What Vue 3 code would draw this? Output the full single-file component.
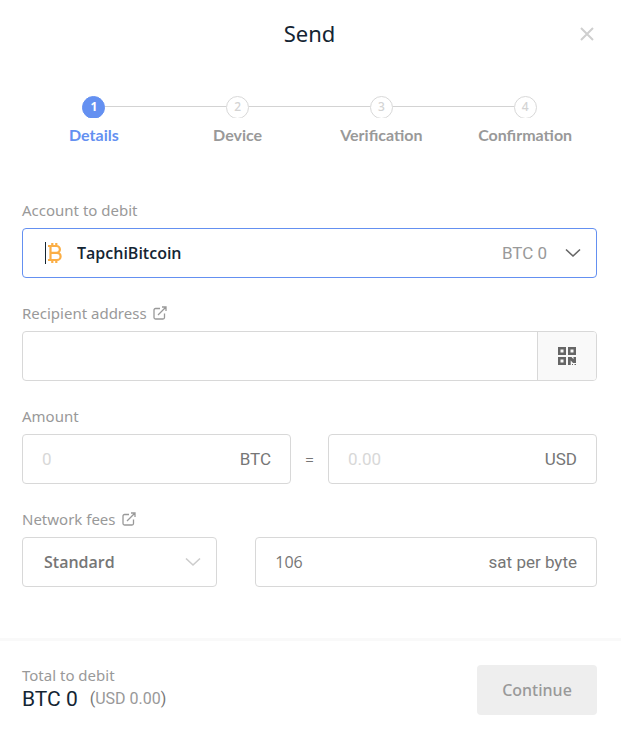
<script setup>
import { ref } from 'vue'

const steps = ['Details', 'Device', 'Verification', 'Confirmation']
const account = ref('TapchiBitcoin')
const recipient = ref('')
const amount = ref('')
const fiat = ref('')
const speed = ref('Standard')
const fee = ref('106')
</script>

<template>
  <main class="modal">
    <header class="head">
      <h1>Send</h1>
      <button class="close" type="button" aria-label="Close">
        <svg width="16" height="16" viewBox="0 0 16 16"><path d="M2 2l12 12M14 2L2 14" fill="none" stroke="#cfcfcf" stroke-width="2" /></svg>
      </button>
    </header>

    <ol class="steps">
      <li v-for="(name, i) in steps" :key="name" :class="{ active: i === 0 }">
        <div class="rail"><span class="dot">{{ i + 1 }}</span></div>
        <span class="name">{{ name }}</span>
      </li>
    </ol>

    <form class="form" @submit.prevent>
      <section>
        <label class="label" for="account">Account to debit</label>
        <div class="field account">
          <span class="caret"></span>
          <svg class="coin" width="16" height="22" viewBox="0 0 16 22">
            <path d="M1 4h8.500a3.300 3.300 0 0 1 0 6.800H3.500M3.500 10.800H10a3.600 3.600 0 0 1 0 7.200H1M3.500 4v14M5.300 1v3M9.300 1v3M5.300 18v3M9.300 18v3" fill="none" stroke="#fbae45" stroke-width="2.200" />
          </svg>
          <select id="account" v-model="account"><option>TapchiBitcoin</option></select>
          <span class="balance">BTC 0</span>
          <svg width="16" height="10" viewBox="0 0 16 10"><path d="M1 1.500l7 6.500 7-6.500" fill="none" stroke="#666" stroke-width="1.600" /></svg>
        </div>
      </section>

      <section>
        <label class="label" for="recipient">Recipient address
          <svg width="14" height="14" viewBox="0 0 14 14"><path d="M7 2.500H2.500a1.500 1.500 0 0 0-1.500 1.500v7.500A1.500 1.500 0 0 0 2.500 13H10a1.500 1.500 0 0 0 1.500-1.500V7.500M5 9l7.500-7.500M9 1h4v4" fill="none" stroke="#999" stroke-width="1.300" /></svg>
        </label>
        <div class="field recipient">
          <input id="recipient" v-model="recipient" type="text" />
          <button class="qr" type="button" aria-label="Scan QR code">
            <svg width="18" height="18" viewBox="0 0 18 18" fill="#666">
              <path fill-rule="evenodd" d="M0 0h8v8H0zM2.500 2.500v3h3v-3zM10 0h8v8h-8zM12.500 2.500v3h3v-3zM0 10h8v8H0zM2.500 12.500v3h3v-3z" />
              <path d="M10 10h3.500l2 2.300V10H18v6h-3l-2.300-2.500V18H10zM14 17h1v1h-1zM16.500 17h1.500v1h-1.500z" />
            </svg>
          </button>
        </div>
      </section>

      <section>
        <label class="label" for="amount">Amount</label>
        <div class="amounts">
          <div class="field">
            <input id="amount" v-model="amount" type="text" placeholder="0" />
            <label class="unit" for="amount">BTC</label>
          </div>
          <span class="equals">=</span>
          <div class="field">
            <input id="fiat" v-model="fiat" type="text" placeholder="0.00" aria-label="Amount in USD" />
            <label class="unit" for="fiat">USD</label>
          </div>
        </div>
      </section>

      <section>
        <label class="label" for="speed">Network fees
          <svg width="14" height="14" viewBox="0 0 14 14"><path d="M7 2.500H2.500a1.500 1.500 0 0 0-1.500 1.500v7.500A1.500 1.500 0 0 0 2.500 13H10a1.500 1.500 0 0 0 1.500-1.500V7.500M5 9l7.500-7.500M9 1h4v4" fill="none" stroke="#999" stroke-width="1.300" /></svg>
        </label>
        <div class="fees">
          <div class="field speed">
            <select id="speed" v-model="speed"><option>Standard</option></select>
            <svg width="16" height="10" viewBox="0 0 16 10"><path d="M1 1.500l7 6.500 7-6.500" fill="none" stroke="#ccc" stroke-width="1.600" /></svg>
          </div>
          <div class="field">
            <input id="fee" v-model="fee" class="fee" type="text" />
            <label class="unit" for="fee">sat per byte</label>
          </div>
        </div>
      </section>
    </form>

    <footer class="foot">
      <div>
        <div class="label">Total to debit</div>
        <div class="total">BTC 0 <span class="fiat">(<span>USD 0.00</span>)</span></div>
      </div>
      <button class="continue" type="button" disabled>Continue</button>
    </footer>
  </main>
</template>

<style>
body {
  margin: 0;
  background: #fff;
}
</style>

<style scoped>
* {
  box-sizing: border-box;
}
.modal {
  font-family: "Noto Sans", "Open Sans", sans-serif;
  color: #142533;
}
button, input, select {
  font: inherit;
  border: 0;
  outline: 0;
  padding: 0;
  margin: 0;
  background: none;
}
svg {
  display: block;
  flex: none;
}
.head {
  display: grid;
  grid-template-columns: 1fr auto 1fr;
  align-items: center;
  height: 68px;
  padding: 0 26px 0 24px;
}
h1 {
  grid-column: 2;
  margin: 0;
  padding-bottom: 2px;
  font-size: 22px;
  font-weight: 400;
  line-height: 28px;
}
.close {
  justify-self: end;
}
.steps {
  display: grid;
  grid-template-columns: repeat(4, 1fr);
  list-style: none;
  margin: 0;
  padding: 28px 24px 0 22px;
  text-align: center;
}
.rail {
  display: flex;
  height: 22px;
  overflow: hidden;
}
.rail::before, .rail::after {
  content: "";
  flex: 1;
  height: 1px;
  margin-top: 10px;
  background: #d3d3d3;
}
li:first-child .rail::before, li:last-child .rail::after {
  background: none;
}
.dot {
  width: 23px;
  height: 23px;
  border: 1px solid #d8d8d8;
  border-radius: 50%;
  font-family: "Noto Sans", sans-serif;
  font-size: 12px;
  font-weight: 500;
  line-height: 19px;
  color: #d3d3d3;
}
.name {
  display: block;
  margin-top: 7px;
  font-family: Lato, "Noto Sans", sans-serif;
  font-size: 16px;
  font-weight: 700;
  line-height: 20px;
  color: #999;
}
.active .dot {
  border-color: #6490f1;
  background: #6490f1;
  color: #fff;
  font-weight: 700;
}
.active .name {
  color: #6490f1;
}
.form {
  display: grid;
  gap: 25px;
  padding: 55px 24px 51px 22px;
}
.label {
  display: flex;
  align-items: center;
  gap: 6px;
  font-size: 15px;
  line-height: 20px;
  color: #999;
}
section > .label {
  margin-bottom: 8px;
}
.field {
  display: flex;
  align-items: center;
  height: 50px;
  min-width: 0;
  padding: 0 19px;
  border: 1px solid #d8d8d8;
  border-radius: 4px;
}
.field input, .field select {
  flex: 1;
  min-width: 0;
  width: 0;
  height: 48px;
  font-family: Roboto, sans-serif;
  font-size: 17px;
  color: #767676;
}
.field select {
  appearance: none;
  font-family: "Open Sans", sans-serif;
  font-size: 16px;
  font-weight: 600;
}
.field input::placeholder {
  color: #d8d8d8;
}
.field .fee {
  font-family: "Open Sans", sans-serif;
  font-size: 16px;
}
.account {
  padding: 0 15px 0 22px;
  border-color: #6490f1;
}
.field.account select {
  margin-left: 14px;
  color: #142533;
}
.caret {
  width: 1px;
  height: 22px;
  margin-right: 1px;
  background: #142533;
}
.balance {
  margin-right: 18px;
  font-family: Roboto, sans-serif;
  font-size: 17px;
  color: #999;
}
.recipient {
  padding: 0;
}
.recipient input {
  padding: 0 19px;
}
.qr {
  display: grid;
  place-items: center;
  width: 59px;
  height: 48px;
  border-left: 1px solid #d8d8d8;
  border-radius: 0 3px 3px 0;
  background: #f9f9f9;
}
.unit {
  font-family: Roboto, sans-serif;
  font-size: 17px;
  color: #767676;
}
.amounts {
  display: grid;
  grid-template-columns: 1fr 37px 1fr;
  align-items: center;
}
.equals {
  text-align: center;
  font-size: 15px;
  color: #767676;
}
.fees {
  display: grid;
  grid-template-columns: 4fr 7fr;
  gap: 38px;
}
.speed {
  padding: 0 15px 0 21px;
}
.foot {
  display: flex;
  align-items: flex-start;
  justify-content: space-between;
  padding: 24px 24px 22px 22px;
  border-top: 3px solid #f9f9f9;
}
.total {
  display: flex;
  align-items: center;
  gap: 12px;
  font-family: Roboto, sans-serif;
  font-size: 21px;
  line-height: 28px;
}
.fiat {
  font-size: 16px;
  color: #767676;
}
.fiat span {
  color: #999;
}
.continue {
  width: 120px;
  height: 50px;
  border-radius: 4px;
  background: #eee;
  font-size: 16px;
  font-weight: 500;
  color: #999;
}
</style>
